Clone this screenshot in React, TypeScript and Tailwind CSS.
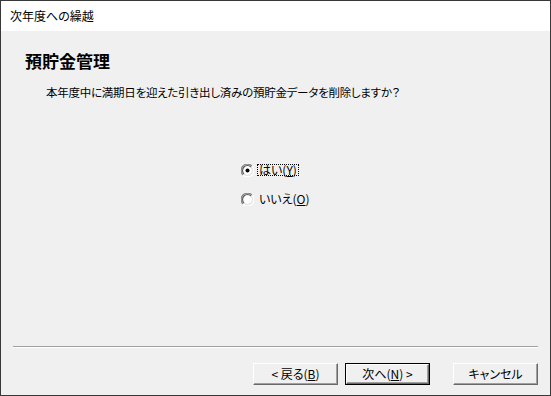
import React from "react";

const font = "font-['MS_UI_Gothic','Noto_Sans_CJK_JP',sans-serif] [font-feature-settings:'palt']";

function Radio({ checked }: { checked: boolean }) {
  return (
    <svg width="13" height="13" viewBox="0 0 13 13" className="shrink-0">
      <circle cx="6.5" cy="6.5" r="5" fill="#ffffff" />
      <path d="M11 2 A6 6 0 0 0 2 11" fill="none" stroke="#8a8a8a" strokeWidth="1.3" />
      <path d="M2 11 A6 6 0 0 0 11 2" fill="none" stroke="#ffffff" strokeWidth="1.3" />
      <path d="M10 3 A4.8 4.8 0 0 0 3 10" fill="none" stroke="#555555" strokeWidth="1.1" />
      <path d="M3 10 A4.8 4.8 0 0 0 10 3" fill="none" stroke="#e3e3e3" strokeWidth="1.1" />
      {checked && <circle cx="6.5" cy="6.5" r="2" fill="#000000" />}
    </svg>
  );
}

function Btn({ children, def }: { children: React.ReactNode; def?: boolean }) {
  return (
    <div className={`w-[85px] h-[22px] ${def ? "border border-black" : ""}`}>
      <div className="w-full h-full border border-t-white border-l-white border-r-[#696969] border-b-[#696969] shadow-[inset_-1px_-1px_0_#a0a0a0] bg-[#f0f0f0] flex items-center justify-center text-[12px] text-black leading-none">
        {children}
      </div>
    </div>
  );
}

export default function App() {
  return (
    <div className={`w-[551px] h-[396px] border border-[#383838] flex flex-col ${font} text-black`}>
      <div className="h-[30px] bg-white flex items-center pl-[9px] text-[12px]">次年度への繰越</div>
      <div className="flex-1 bg-[#f0f0f0] flex flex-col">
        <div className="pl-[24px] mt-[21px] text-[17px] font-bold leading-[17px]">預貯金管理</div>
        <div className="pl-[45px] mt-[17px] text-[11.5px] leading-[12px] tracking-[-0.25px]">本年度中に満期日を迎えた引き出し済みの預貯金データを削除しますか？</div>
        <div className="ml-[240px] mt-[66px] flex flex-col gap-[17px] text-[12px] leading-[12px]">
          <div className="flex items-center h-[12px]">
            <Radio checked />
            <span className="ml-[3px] border border-dotted border-black px-[1px] leading-[10px] h-[12px] flex items-center">
              はい(<span className="underline">Y</span>)
            </span>
          </div>
          <div className="flex items-center h-[12px]">
            <Radio checked={false} />
            <span className="ml-[4px] px-[1px]">
              いいえ(<span className="underline">O</span>)
            </span>
          </div>
        </div>
        <div className="flex-1" />
        <div className="mx-[12px] h-[2px] border-t border-t-[#a0a0a0] border-b border-b-white" />
        <div className="flex justify-end mr-[12px] mt-[15px] mb-[10px]">
          <Btn>&lt; 戻る(<span className="underline">B</span>)</Btn>
          <div className="w-[7px]" />
          <Btn def>次へ(<span className="underline">N</span>) &gt;</Btn>
          <div className="w-[23px]" />
          <Btn>キャンセル</Btn>
        </div>
      </div>
    </div>
  );
}
